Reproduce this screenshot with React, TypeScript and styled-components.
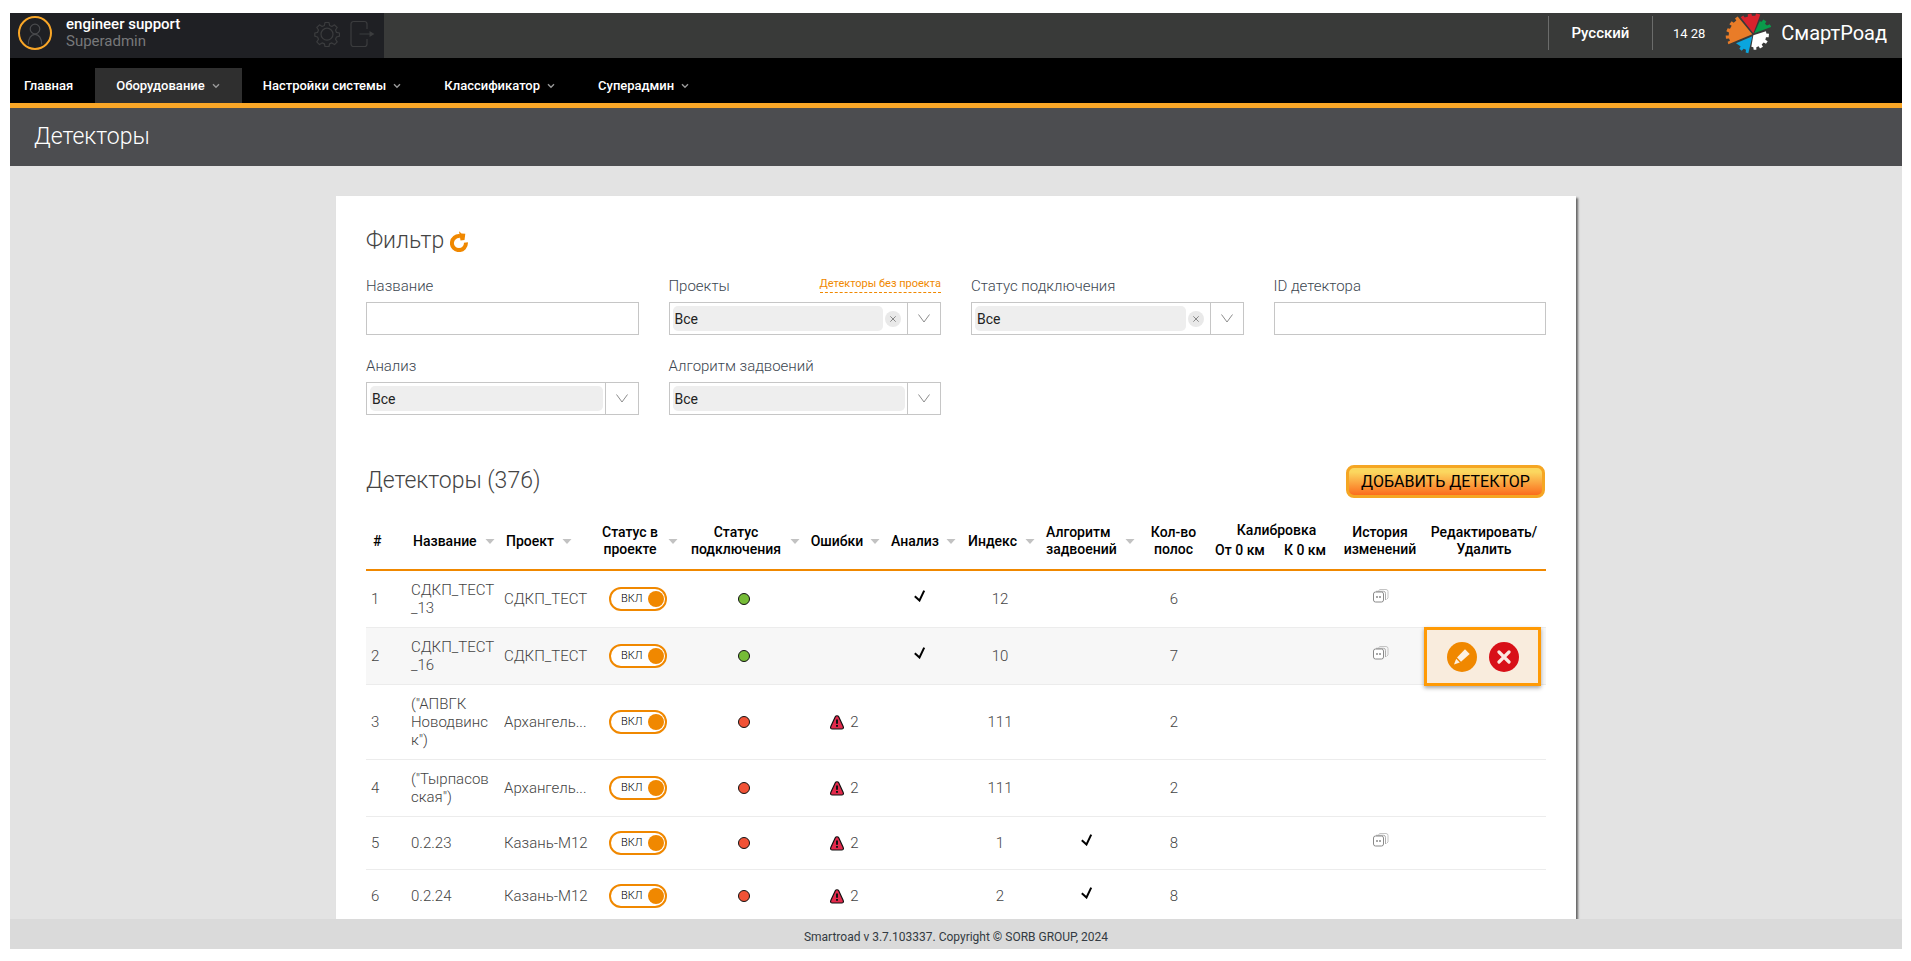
import React, { useState } from "react";
import styled, { createGlobalStyle, css } from "styled-components";

const orange = "#f08800";
const amber = "#f9a627";

const GlobalStyle = createGlobalStyle`
  *, *::before, *::after { box-sizing: border-box; }
  body {
    margin: 0;
    background: #fff;
    color: #444;
    font-family: Roboto, "Liberation Sans", sans-serif;
    font-size: 15px;
    font-weight: 300;
  }
  button, input, select { font: inherit; color: inherit; }
  button { padding: 0; border: 0; background: none; cursor: pointer; }
  h1, h2 { margin: 0; font-size: 23px; font-weight: 300; }
  svg { display: block; flex: none; }
`;

const Page = styled.div`
  display: flex;
  flex-direction: column;
  height: 100vh;
  padding: 13px 9px 12px 10px;
`;

const TopBar = styled.header`
  display: flex;
  justify-content: space-between;
  flex: none;
  height: 45px;
  background: #393a39;
`;

const UserPanel = styled.div`
  display: flex;
  align-items: center;
  width: 374px;
  padding: 0 9px 0 8px;
  background: #1f2024;
`;

const Avatar = styled.span`
  display: grid;
  place-items: end center;
  width: 34px;
  height: 34px;
  margin: 0 14px 5px 0;
  padding-bottom: 3px;
  border: 2px solid ${amber};
  border-radius: 50%;
`;

const UserText = styled.div`
  flex: 1;
  margin-bottom: 5px;
  font-size: 15px;
  line-height: 17px;
`;

const UserName = styled.div`
  font-weight: 500;
  color: #fff;
`;

const UserRole = styled.div`
  font-weight: 400;
  color: #77787a;
`;

const UserButton = styled.button`
  margin: 0 0 4px 10px;
`;

const BrandArea = styled.div`
  display: flex;
  align-items: center;
  padding: 0 15px 5px 0;
  color: #fff;
`;

const Language = styled.button`
  width: 105px;
  height: 34px;
  border: solid #6b6c6b;
  border-width: 0 1px;
  font-size: 15px;
  font-weight: 500;
`;

const Clock = styled.time`
  margin: 0 20px;
  font-size: 13px;
  font-weight: 400;
`;

const Brand = styled.a`
  display: flex;
  align-items: center;
  gap: 10px;
  height: 40px;
  font-size: 20px;
  font-weight: 400;
  color: #fff;
  text-decoration: none;
`;

const Nav = styled.nav`
  display: flex;
  align-items: flex-end;
  flex: none;
  height: 50px;
  border-bottom: 5px solid ${amber};
  background: #000;
`;

const NavItem = styled.a<{ $active?: boolean; $first?: boolean }>`
  display: flex;
  align-items: center;
  gap: 7px;
  height: 35px;
  padding: 0 22px 0 ${(p) => (p.$first ? 14 : 21)}px;
  background: ${(p) => (p.$active ? "#2f2f2f" : "transparent")};
  color: #fff;
  font-size: 13px;
  font-weight: 500;
  text-decoration: none;
`;

const TitleBar = styled.div`
  flex: none;
  height: 58px;
  padding-left: 24px;
  background: #4c4d50;
  color: #fff;

  h1 {
    line-height: 58px;
  }
`;

const Content = styled.main`
  flex: 1;
  min-height: 0;
  padding: 30px 30px 0;
  overflow: hidden;
  background: #e3e3e3;
`;

const Card = styled.div`
  max-width: 1240px;
  min-height: 100%;
  margin: 0 auto;
  padding: 31px 30px;
  background: #fff;
  box-shadow: 2px 2px 2px #666;
`;

const FilterHead = styled.div`
  display: flex;
  align-items: center;
  gap: 6px;
  margin-bottom: 21px;

  h2 {
    line-height: 28px;
  }
`;

const FilterGrid = styled.form`
  display: grid;
  grid-template-columns: repeat(4, 1fr);
  gap: 21px 30px;
`;

const FieldHead = styled.div`
  display: flex;
  justify-content: space-between;
  height: 20px;
  margin-bottom: 6px;
  line-height: 20px;
  color: #3c4650;
`;

const ProjectLink = styled.a`
  height: 17px;
  border-bottom: 1px dashed ${orange};
  font-size: 11px;
  font-weight: 400;
  line-height: 15px;
  color: ${orange};
  text-decoration: none;
`;

const TextInput = styled.input`
  width: 100%;
  height: 33px;
  padding: 0 6px;
  border: 1px solid #c6c6c6;
  background: #fff;
`;

const SelectBox = styled.div`
  display: flex;
  align-items: center;
  height: 33px;
  border: 1px solid #c6c6c6;
`;

const Select = styled.select`
  appearance: none;
  flex: 1;
  min-width: 0;
  height: 25px;
  margin: 0 2px 0 3px;
  padding: 0 2px;
  border: 0;
  border-radius: 5px;
  background: #eee;
  color: #222;
  font-size: 14px;
  font-weight: 400;
`;

const ClearButton = styled.button`
  display: grid;
  place-items: center;
  width: 16px;
  height: 16px;
  margin-right: 6px;
  border-radius: 50%;
  background: #e9e9e9;
`;

const SelectArrow = styled.span`
  display: grid;
  place-items: center;
  align-self: stretch;
  width: 33px;
  border-left: 1px solid #c6c6c6;
`;

const ListHead = styled.div`
  display: flex;
  justify-content: space-between;
  align-items: center;
  margin: 50px 0 15px;

  h2 {
    padding-bottom: 2px;
    line-height: 28px;
  }
`;

const AddButton = styled.button`
  width: 199px;
  height: 33px;
  margin-right: 1px;
  border: 3px solid #f5a623;
  border-radius: 8px;
  background: linear-gradient(#fbd75f 15%, #fb6c1d);
  color: #000;
  font-size: 16px;
  font-weight: 400;
`;

const Table = styled.table`
  width: 100%;
  table-layout: fixed;
  border-collapse: separate;
  border-spacing: 0;
`;

const Col = styled.col<{ $width?: number }>`
  width: ${(p) => (p.$width ? `${p.$width}px` : "auto")};
`;

const headText = css`
  padding: 0;
  color: #000;
  font-size: 14px;
  font-weight: 500;
  line-height: 17px;
`;

const HeadCell = styled.th`
  ${headText}
  border-bottom: 2px solid ${orange};
`;

const GroupCell = styled.th`
  ${headText}
  height: 28px;
  padding: 0 0 2px 7px;
  vertical-align: bottom;
`;

const SubCell = styled.th`
  ${headText}
  height: 30px;
  padding-top: 1px;
  border-bottom: 2px solid ${orange};
  vertical-align: top;
`;

const SortButton = styled.button<{ $align?: "left" | "spread" }>`
  display: flex;
  align-items: center;
  gap: ${(p) => (p.$align === "left" ? 8 : 0)}px;
  width: 100%;
  padding: 0 4px 0 ${(p) => (p.$align ? 7 : 0)}px;
  text-align: ${(p) => (p.$align ? "left" : "center")};

  span {
    flex: ${(p) => (p.$align === "left" ? "none" : "1")};
  }
`;

const Row = styled.tr<{ $active?: boolean }>`
  height: 53px;
  background: ${(p) => (p.$active ? "#f7f7f7" : "transparent")};
`;

const Cell = styled.td<{ $align?: "left" }>`
  position: relative;
  padding: 10px 4px 10px 5px;
  border-bottom: 1px solid #ececec;
  line-height: 18px;
  text-align: ${(p) => p.$align ?? "center"};
  overflow-wrap: break-word;
`;

const Clipped = styled.div`
  overflow: hidden;
  text-overflow: ellipsis;
  white-space: nowrap;
`;

const Centered = styled.div`
  display: flex;
  justify-content: center;
  align-items: center;
  gap: 6px;
`;

const RaisedIcon = styled.div<{ $shift?: boolean }>`
  display: flex;
  justify-content: center;
  padding: 0 ${(p) => (p.$shift ? 5 : 0)}px 7px 0;
`;

const Toggle = styled.label`
  display: flex;
  align-items: center;
  justify-content: flex-end;
  gap: 5px;
  width: 58px;
  height: 24px;
  margin: 0 auto;
  padding-right: 1px;
  border: 2px solid ${orange};
  border-radius: 12px;
  background: #fff;
  color: #000;
  font-size: 11px;

  input {
    appearance: none;
    width: 16px;
    height: 16px;
    margin: 0;
    border-radius: 50%;
    background: ${orange};
  }
`;

const StatusDot = styled.span<{ $ok: boolean }>`
  display: block;
  width: 12px;
  height: 12px;
  margin: 0 auto;
  border: 1px solid #111;
  border-radius: 50%;
  background: ${(p) => (p.$ok ? "#76bc37" : "#f15236")};
`;

const ActionFrame = styled.div`
  position: absolute;
  inset: -1px 5px -2px 2px;
  display: flex;
  justify-content: center;
  align-items: center;
  gap: 12px;
  border: 3px solid #ff9a05;
  background: #f9ecdd;
  box-shadow: 0 2px 4px rgba(0, 0, 0, 0.35);
`;

const RoundButton = styled.button<{ $color: string }>`
  display: grid;
  place-items: center;
  width: 30px;
  height: 30px;
  border-radius: 50%;
  background: ${(p) => p.$color};
`;

const Footer = styled.footer`
  flex: none;
  height: 30px;
  padding-top: 3px;
  background: #dadada;
  color: #333a42;
  font-size: 12px;
  font-weight: 400;
  line-height: 30px;
  text-align: center;
`;

const Chevron = () => (
  <svg width="8" height="6" viewBox="0 0 8 6" fill="none" stroke="#999" strokeWidth="1.4">
    <path d="M1 1.2 4 4.2 7 1.2" />
  </svg>
);

const PersonIcon = () => (
  <svg width="16" height="22" viewBox="0 0 16 22" fill="none" stroke="#4a4b4e" strokeWidth="1.2">
    <circle cx="8" cy="6" r="4.8" />
    <path d="M1.3 21.5C1.3 15.5 4 11.4 8 11.4s6.700 4.100 6.700 10.100" />
  </svg>
);

const GearIcon = () => (
  <svg width="26" height="26" viewBox="0 0 26 26" fill="none" stroke="#3b3c3e" strokeWidth="1.2" strokeLinejoin="round">
    <path d="M11 1.500h4l.6 3 2.300 1 2.600-1.700 2.700 2.700L21.500 9l1 2.400 3 .6v3.200l-3 .8-1 2.200 1.700 2.700-2.700 2.700-2.700-1.700-2.200 1-.6 2.600h-4l-.6-2.600-2.300-1-2.600 1.700-2.700-2.700 1.700-2.700-1-2.200-2.700-.8V12l2.700-.6 1-2.400-1.700-2.500 2.700-2.700 2.600 1.700 2.300-1z" />
    <circle cx="13" cy="13.200" r="6" />
  </svg>
);

const ExitIcon = () => (
  <svg width="25" height="28" viewBox="0 0 25 28" fill="none" stroke="#3b3c3e" strokeWidth="1.2">
    <path d="M17 9V4a2.500 2.500 0 0 0-2.500-2.500h-11A2.500 2.500 0 0 0 1 4v20a2.500 2.500 0 0 0 2.500 2.500h11A2.500 2.500 0 0 0 17 24v-5M9.500 14H23" />
    <path d="M19.500 11 24.500 14l-5 3z" fill="#3b3c3e" stroke="none" />
  </svg>
);

const LogoMark = () => (
  <svg width="46" height="41" viewBox="613 39 138 122">
    <path fill="#e97c28" d="M695 102 651 49l-8 6 4 6-8 7-6-5-7 9 7 5-5 9-7-2-4 9 8 4-1 9-9 0 1 10 9-1 3 7-7 3 2 7z" />
    <path fill="#d9232d" d="M698 99 660 51l8-5 4 6 10-3-1-7 11-2 2 7 10 0 2-7 13 3-3 8z" />
    <path fill="#0a9c4b" d="m701 99 16-36 6 2 5-7 9 6-4 7 6 5 8-4 5 8z" />
    <path fill="#fff" d="m698 105 38-12 1 7 8 1-1 10-8 0-2 8 7 4-5 8-7-4-6 6 4 7-9 5-4-7-7 3 0 8-8 0-1-8-6-1z" />
    <path fill="#0aa5de" d="m695 108-12 51-8-2 1-8-7-3-6 6-7-6 4-7-5-4-9-6z" />
  </svg>
);

const RefreshIcon = () => (
  <svg width="18" height="21" viewBox="0 0 18 21">
    <path d="M15.900 11.500A7 7 0 1 1 10 5.200" fill="none" stroke={orange} strokeWidth="4" />
    <path d="M9 .2l2.500 2.300 3.800.2-.8 6.300-4 .500z" fill={orange} />
  </svg>
);

const ThinArrow = () => (
  <svg width="12" height="9" viewBox="0 0 12 9" fill="none" stroke="#8c8c8c" strokeWidth="1">
    <path d="M.5.5 6 8 11.500.5" />
  </svg>
);

const SmallCross = () => (
  <svg width="6" height="6" viewBox="0 0 6 6" stroke="#888" strokeWidth="1">
    <path d="M.3.3l5.400 5.400M5.700.3.3 5.700" />
  </svg>
);

const SortArrow = () => (
  <svg width="10" height="5" viewBox="0 0 10 5">
    <path d="M.5 0h9L5 5z" fill="#c2c2c2" />
  </svg>
);

const CheckIcon = () => (
  <svg width="12" height="12" viewBox="0 0 12 12" fill="none" stroke="#000" strokeWidth="2">
    <path d="M.8 6.200 5.500 10.500 10.200.6" />
  </svg>
);

const WarningIcon = () => (
  <svg width="14" height="15" viewBox="0 0 14 15">
    <path d="M5.300 1.800C6 .4 8 .4 8.700 1.800l4.400 9.400c.8 1.600 0 2.800-1.500 2.800H2.400C.9 14 .1 12.800.9 11.200z" fill="#e32a4c" stroke="#111" strokeWidth="1.200" />
    <path d="M7 4.500v4.200M7 10v1.800" stroke="#111" strokeWidth="2" />
  </svg>
);

const HistoryIcon = () => (
  <svg width="16" height="14" viewBox="0 0 16 14" fill="none">
    <path d="M5.500 1.500 7 .5h6a2 2 0 0 1 2 2V9l-1.500 1.500" stroke="#c4c4c4" />
    <path d="M3 2.300h7.500a2 2 0 0 1 2 2V11" stroke="#adadad" />
    <rect x=".5" y="3" width="10" height="10" rx="2" stroke="#8a8a8a" fill="#fff" />
    <path d="M3 8h2M6 8h2" stroke="#8a8a8a" strokeWidth="1.500" />
  </svg>
);

const PencilIcon = () => (
  <svg width="16" height="16" viewBox="0 0 16 16" fill="#fdf1e2">
    <path d="M11 .3 15.700 5 7 12.800 3 8.600z" />
    <path d="M2.200 9.800 5.800 13.400 0 15.600z" />
  </svg>
);

const CrossIcon = () => (
  <svg width="14" height="14" viewBox="0 0 14 14" stroke="#fbe9e0" strokeWidth="3.200" strokeLinecap="round">
    <path d="M2 2l10 10M12 2 2 12" />
  </svg>
);

interface Detector {
  name: string;
  project: string;
  ok?: boolean;
  errors?: number;
  analysis?: boolean;
  index: number;
  doubling?: boolean;
  lanes: number;
  history?: boolean;
  active?: boolean;
}

const detectors: Detector[] = [
  { name: "СДКП_ТЕСТ_13", project: "СДКП_ТЕСТ", ok: true, analysis: true, index: 12, lanes: 6, history: true },
  { name: "СДКП_ТЕСТ_16", project: "СДКП_ТЕСТ", ok: true, analysis: true, index: 10, lanes: 7, history: true, active: true },
  { name: '("АПВГК Новодвинск")', project: "Архангель...", errors: 2, index: 111, lanes: 2 },
  { name: '("Тырпасовская")', project: "Архангель...", errors: 2, index: 111, lanes: 2 },
  { name: "0.2.23", project: "Казань-М12", errors: 2, index: 1, doubling: true, lanes: 8, history: true },
  { name: "0.2.24", project: "Казань-М12", errors: 2, index: 2, doubling: true, lanes: 8 },
];

const columnWidths = [40, 93, 93, 90, 122, 80, 76, 79, 100, 69, 64, 66, 84];

const navItems = ["Оборудование", "Настройки системы", "Классификатор", "Суперадмин"];

function TextField({ id, label }: { id: string; label: string }) {
  return (
    <div>
      <FieldHead>
        <label htmlFor={id}>{label}</label>
      </FieldHead>
      <TextInput id={id} type="text" />
    </div>
  );
}

function SelectField(props: { id: string; label: string; clearable?: boolean; link?: string }) {
  return (
    <div>
      <FieldHead>
        <label htmlFor={props.id}>{props.label}</label>
        {props.link && <ProjectLink href="#no-project">{props.link}</ProjectLink>}
      </FieldHead>
      <SelectBox>
        <Select id={props.id}>
          <option>Все</option>
        </Select>
        {props.clearable && (
          <ClearButton type="button" aria-label="Очистить">
            <SmallCross />
          </ClearButton>
        )}
        <SelectArrow>
          <ThinArrow />
        </SelectArrow>
      </SelectBox>
    </div>
  );
}

function SortHead({ children, align }: { children: React.ReactNode; align?: "left" | "spread" }) {
  return (
    <HeadCell rowSpan={2} scope="col">
      <SortButton type="button" $align={align}>
        <span>{children}</span>
        <SortArrow />
      </SortButton>
    </HeadCell>
  );
}

function DetectorRow({ item, number }: { item: Detector; number: number }) {
  const [enabled, setEnabled] = useState(true);
  return (
    <Row $active={item.active}>
      <Cell $align="left">{number}</Cell>
      <Cell $align="left">{item.name}</Cell>
      <Cell $align="left">
        <Clipped>{item.project}</Clipped>
      </Cell>
      <Cell>
        <Toggle>
          ВКЛ
          <input type="checkbox" checked={enabled} onChange={() => setEnabled(!enabled)} />
        </Toggle>
      </Cell>
      <Cell>
        <StatusDot $ok={!!item.ok} />
      </Cell>
      <Cell>
        {item.errors && (
          <Centered>
            <WarningIcon />
            {item.errors}
          </Centered>
        )}
      </Cell>
      <Cell>
        {item.analysis && (
          <RaisedIcon $shift>
            <CheckIcon />
          </RaisedIcon>
        )}
      </Cell>
      <Cell>{item.index}</Cell>
      <Cell>
        {item.doubling && (
          <RaisedIcon $shift>
            <CheckIcon />
          </RaisedIcon>
        )}
      </Cell>
      <Cell>{item.lanes}</Cell>
      <Cell />
      <Cell />
      <Cell>
        {item.history && (
          <RaisedIcon>
            <button type="button" aria-label="История изменений">
              <HistoryIcon />
            </button>
          </RaisedIcon>
        )}
      </Cell>
      <Cell>
        {item.active && (
          <ActionFrame>
            <RoundButton type="button" $color={orange} aria-label="Редактировать">
              <PencilIcon />
            </RoundButton>
            <RoundButton type="button" $color="#d81018" aria-label="Удалить">
              <CrossIcon />
            </RoundButton>
          </ActionFrame>
        )}
      </Cell>
    </Row>
  );
}

export default function App() {
  return (
    <>
      <GlobalStyle />
      <Page>
        <TopBar>
          <UserPanel>
            <Avatar>
              <PersonIcon />
            </Avatar>
            <UserText>
              <UserName>engineer support</UserName>
              <UserRole>Superadmin</UserRole>
            </UserText>
            <UserButton type="button" aria-label="Настройки">
              <GearIcon />
            </UserButton>
            <UserButton type="button" aria-label="Выход">
              <ExitIcon />
            </UserButton>
          </UserPanel>
          <BrandArea>
            <Language type="button">Русский</Language>
            <Clock>14 28</Clock>
            <Brand href="#home">
              <LogoMark />
              СмартРоад
            </Brand>
          </BrandArea>
        </TopBar>
        <Nav>
          <NavItem href="#main" $first>
            Главная
          </NavItem>
          {navItems.map((label, i) => (
            <NavItem key={label} href="#menu" $active={i === 0}>
              {label}
              <Chevron />
            </NavItem>
          ))}
        </Nav>
        <TitleBar>
          <h1>Детекторы</h1>
        </TitleBar>
        <Content>
          <Card>
            <FilterHead>
              <h2>Фильтр</h2>
              <button type="button" aria-label="Сбросить фильтр">
                <RefreshIcon />
              </button>
            </FilterHead>
            <FilterGrid>
              <TextField id="name" label="Название" />
              <SelectField id="projects" label="Проекты" link="Детекторы без проекта" clearable />
              <SelectField id="connection" label="Статус подключения" clearable />
              <TextField id="detector-id" label="ID детектора" />
              <SelectField id="analysis" label="Анализ" />
              <SelectField id="doubling" label="Алгоритм задвоений" />
            </FilterGrid>
            <ListHead>
              <h2>Детекторы (376)</h2>
              <AddButton type="button">ДОБАВИТЬ ДЕТЕКТОР</AddButton>
            </ListHead>
            <Table>
              <colgroup>
                {columnWidths.map((width, i) => (
                  <Col key={i} $width={width} />
                ))}
                <Col />
              </colgroup>
              <thead>
                <tr>
                  <HeadCell rowSpan={2} scope="col">
                    <SortButton as="div" $align="left">
                      #
                    </SortButton>
                  </HeadCell>
                  <SortHead align="left">Название</SortHead>
                  <SortHead align="left">Проект</SortHead>
                  <SortHead>
                    Статус в<br />
                    проекте
                  </SortHead>
                  <SortHead>
                    Статус
                    <br />
                    подключения
                  </SortHead>
                  <SortHead>Ошибки</SortHead>
                  <SortHead>Анализ</SortHead>
                  <SortHead>Индекс</SortHead>
                  <SortHead align="spread">
                    Алгоритм
                    <br />
                    задвоений
                  </SortHead>
                  <HeadCell rowSpan={2} scope="col">
                    Кол-во
                    <br />
                    полос
                  </HeadCell>
                  <GroupCell colSpan={2} scope="colgroup">
                    Калибровка
                  </GroupCell>
                  <HeadCell rowSpan={2} scope="col">
                    История
                    <br />
                    изменений
                  </HeadCell>
                  <HeadCell rowSpan={2} scope="col">
                    Редактировать/
                    <br />
                    Удалить
                  </HeadCell>
                </tr>
                <tr>
                  <SubCell scope="col">От 0 км</SubCell>
                  <SubCell scope="col">К 0 км</SubCell>
                </tr>
              </thead>
              <tbody>
                {detectors.map((item, i) => (
                  <DetectorRow key={item.name} item={item} number={i + 1} />
                ))}
              </tbody>
            </Table>
          </Card>
        </Content>
        <Footer>Smartroad v 3.7.103337. Copyright © SORB GROUP, 2024</Footer>
      </Page>
    </>
  );
}
